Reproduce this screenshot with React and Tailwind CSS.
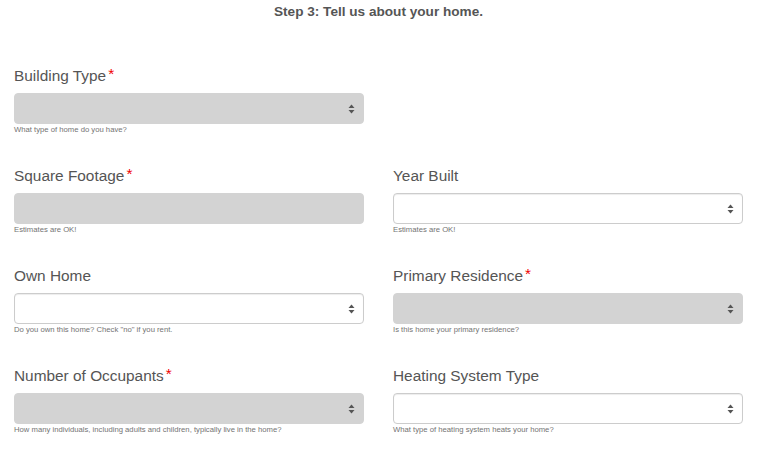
import React from 'react';

const fields = [
  { label: 'Building Type', required: true, filled: true, select: true, help: 'What type of home do you have?' },
  null,
  { label: 'Square Footage', required: true, filled: true, select: false, help: 'Estimates are OK!' },
  { label: 'Year Built', required: false, filled: false, select: true, help: 'Estimates are OK!' },
  { label: 'Own Home', required: false, filled: false, select: true, help: 'Do you own this home? Check "no" if you rent.' },
  { label: 'Primary Residence', required: true, filled: true, select: true, help: 'Is this home your primary residence?' },
  { label: 'Number of Occupants', required: true, filled: true, select: true, help: 'How many individuals, including adults and children, typically live in the home?' },
  { label: 'Heating System Type', required: false, filled: false, select: true, help: 'What type of heating system heats your home?' },
];

function Arrows() {
  return (
    <svg width="7" height="10" viewBox="0 0 7 10" className="absolute right-[8px] top-1/2 -translate-y-1/2">
      <path d="M3.5 0.5 L6.5 4 L0.5 4 Z" fill="#555" />
      <path d="M0.5 6 L6.5 6 L3.5 9.5 Z" fill="#555" />
    </svg>
  );
}

function Field({ field }) {
  if (!field) return <div />;
  return (
    <div className="flex flex-col">
      <label className="text-[15.4px] leading-[20px] text-[#555] mb-[7px]">
        {field.label}
        {field.required && <span className="text-[#f00000] ml-[2px] relative -top-[2px]">*</span>}
      </label>
      <div
        className={
          field.filled
            ? 'relative h-[31px] rounded-[4px] bg-[#d3d3d3] border border-[#d3d3d3]'
            : 'relative h-[31px] rounded-[4px] bg-white border border-[#cccccc] shadow-[inset_0_1px_1px_rgba(0,0,0,0.075)]'
        }
      >
        {field.select && <Arrows />}
      </div>
      <p className="mt-[1px] text-[7.7px] leading-[10px] text-[#737373]">{field.help}</p>
    </div>
  );
}

export default function App() {
  return (
    <div className="min-h-screen bg-white" style={{ fontFamily: '"Liberation Sans", Arial, sans-serif' }}>
      <div className="w-[729px] ml-[14px] pt-[3px]">
        <h2 className="text-center font-bold text-[13.6px] leading-[18px] text-[#555]">
          Step 3: Tell us about your home.
        </h2>
        {/* Campos del formulario */}
        <div className="grid grid-cols-2 gap-x-[29px] gap-y-[31px] mt-[45px]">
          {fields.map((f, i) => (
            <Field key={i} field={f} />
          ))}
        </div>
      </div>
    </div>
  );
}
